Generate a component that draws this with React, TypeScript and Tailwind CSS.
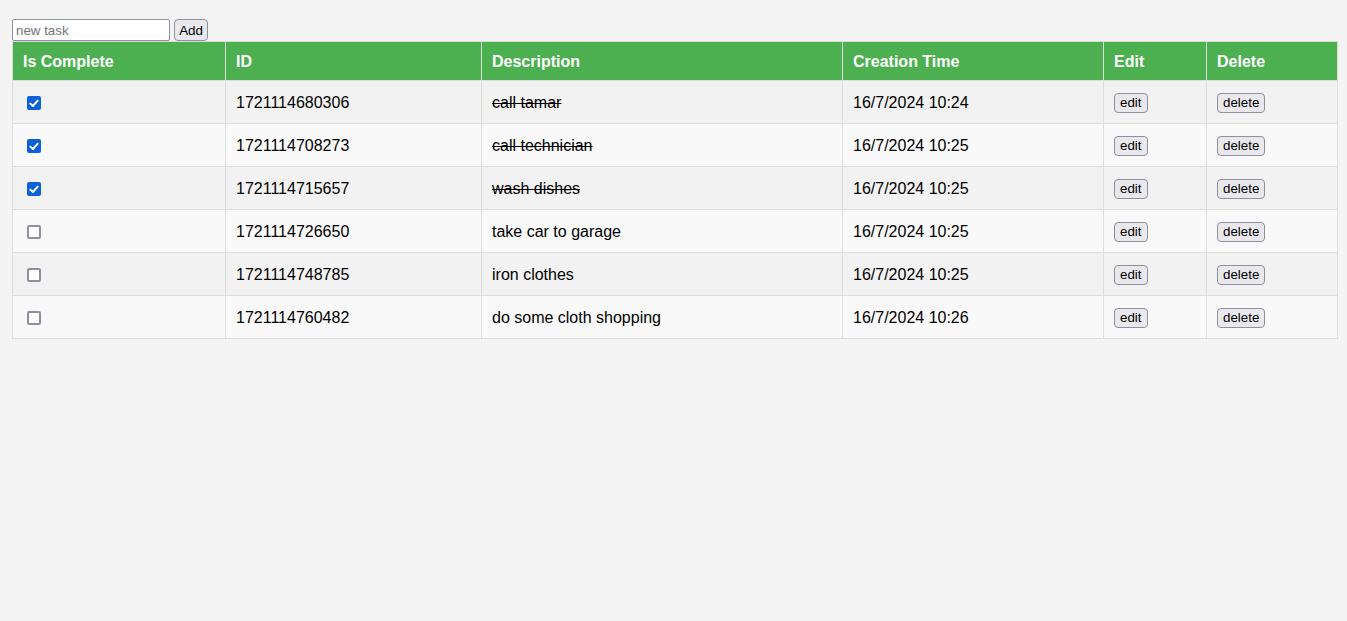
import React, { useState } from 'react';

type Task = {
  id: number;
  description: string;
  created: string;
  done: boolean;
};

const initialTasks: Task[] = [
  { id: 1721114680306, description: 'call tamar', created: '16/7/2024 10:24', done: true },
  { id: 1721114708273, description: 'call technician', created: '16/7/2024 10:25', done: true },
  { id: 1721114715657, description: 'wash dishes', created: '16/7/2024 10:25', done: true },
  { id: 1721114726650, description: 'take car to garage', created: '16/7/2024 10:25', done: false },
  { id: 1721114748785, description: 'iron clothes', created: '16/7/2024 10:25', done: false },
  { id: 1721114760482, description: 'do some cloth shopping', created: '16/7/2024 10:26', done: false },
];

const btn =
  'bg-[#e9e9ed] border border-[#8f8f9d] rounded-[4px] text-[13.33px] leading-[18px] text-black hover:bg-[#d0d0d7]';

const cell = 'border border-[#ddd] px-[10px] pt-[11px] pb-[9px] h-[43px] align-middle';

function Checkbox({ checked, onChange }: { checked: boolean; onChange: () => void }) {
  return (
    <label className="block w-[14px] h-[14px] ml-[4px] cursor-pointer">
      <input type="checkbox" checked={checked} onChange={onChange} className="sr-only" />
      {checked ? (
        <span className="flex w-[14px] h-[14px] items-center justify-center rounded-[2px] bg-[#0b61d8]">
          <svg width="10" height="9" viewBox="0 0 10 9" fill="none">
            <path d="M1.3 4.6 L3.9 7 L8.7 1.6" stroke="white" strokeWidth="1.9" strokeLinecap="round" strokeLinejoin="round" />
          </svg>
        </span>
      ) : (
        <span className="block w-[14px] h-[14px] rounded-[2px] border-2 border-[#8f8f9d] bg-white" />
      )}
    </label>
  );
}

export default function App() {
  const [tasks, setTasks] = useState<Task[]>(initialTasks);
  const [text, setText] = useState('');

  const toggle = (id: number) =>
    setTasks((ts) => ts.map((t) => (t.id === id ? { ...t, done: !t.done } : t)));

  const remove = (id: number) => setTasks((ts) => ts.filter((t) => t.id !== id));

  const add = () => {
    if (!text.trim()) return;
    const now = new Date();
    const created = `${now.getDate()}/${now.getMonth() + 1}/${now.getFullYear()} ${now.getHours()}:${String(now.getMinutes()).padStart(2, '0')}`;
    setTasks((ts) => [...ts, { id: now.getTime(), description: text, created, done: false }]);
    setText('');
  };

  return (
    <div className="min-h-screen bg-[#f4f4f4] pl-3 pr-[9px] pt-[19px] font-['Liberation_Sans',Arial,sans-serif] text-black">
      <div className="flex items-center gap-1 h-[22px]">
        <input
          value={text}
          onChange={(e) => setText(e.target.value)}
          placeholder="new task"
          className="w-[158px] h-[22px] bg-white border border-[#8f8f9d] rounded-[2px] px-[3px] text-[13.33px] placeholder:text-[#757575] outline-none"
        />
        <button onClick={add} className={`${btn} w-[34px] h-[22px] pt-[2px] text-center`}>
          Add
        </button>
      </div>

      <table className="w-full border-collapse text-[16px] leading-[20px]">
        <thead>
          <tr className="bg-[#4caf50] text-white text-left">
            <th className="w-[213px] border border-[#ddd] px-[10px] pt-[11px] pb-[9px] font-bold leading-[18px]">Is Complete</th>
            <th className="w-[256px] border border-[#ddd] px-[10px] pt-[11px] pb-[9px] font-bold leading-[18px]">ID</th>
            <th className="w-[361px] border border-[#ddd] px-[10px] pt-[11px] pb-[9px] font-bold leading-[18px]">Description</th>
            <th className="w-[261px] border border-[#ddd] px-[10px] pt-[11px] pb-[9px] font-bold leading-[18px]">Creation Time</th>
            <th className="w-[103px] border border-[#ddd] px-[10px] pt-[11px] pb-[9px] font-bold leading-[18px]">Edit</th>
            <th className="border border-[#ddd] px-[10px] pt-[11px] pb-[9px] font-bold leading-[18px]">Delete</th>
          </tr>
        </thead>
        <tbody>
          {tasks.map((t, i) => (
            <tr key={t.id} className={i % 2 === 0 ? 'bg-[#f2f2f2]' : 'bg-[#f9f9f9]'}>
              <td className={cell}>
                <Checkbox checked={t.done} onChange={() => toggle(t.id)} />
              </td>
              <td className={cell}>{t.id}</td>
              <td className={`${cell} ${t.done ? 'line-through' : ''}`}>{t.description}</td>
              <td className={cell}>{t.created}</td>
              <td className={cell}>
                <button className={`${btn} px-[5px] h-[20px] -mt-[1px] block`}>edit</button>
              </td>
              <td className={cell}>
                <button className={`${btn} px-[5px] h-[20px] -mt-[1px] block`} onClick={() => remove(t.id)}>
                  delete
                </button>
              </td>
            </tr>
          ))}
        </tbody>
      </table>
    </div>
  );
}
